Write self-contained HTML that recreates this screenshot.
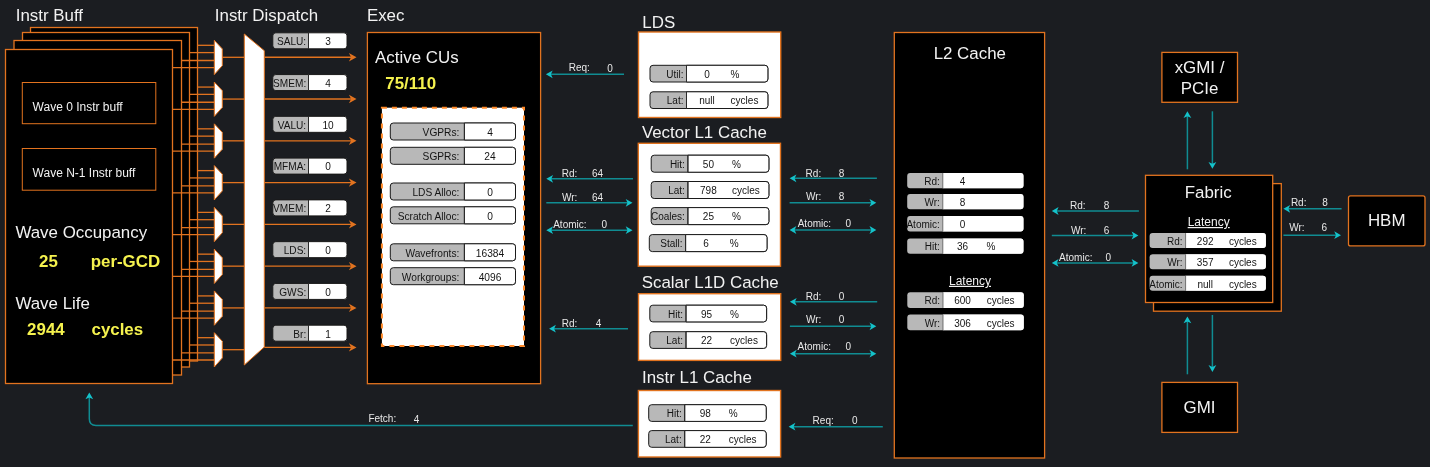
<!DOCTYPE html><html><head><meta charset="utf-8"><style>html,body{margin:0;padding:0;background:#1b1d21;}svg{display:block;will-change:transform;}</style></head><body>
<svg width="1430" height="467" viewBox="0 0 1430 467" font-family="Liberation Sans">
<rect x="0" y="0" width="1430" height="467" fill="#1b1d21"/>
<text x="15.7" y="20.6" font-size="16.9" fill="#f2f2f2">Instr Buff</text>
<text x="214.8" y="20.7" font-size="16.9" fill="#f2f2f2">Instr Dispatch</text>
<text x="366.9" y="20.9" font-size="16.9" fill="#f2f2f2">Exec</text>
<text x="642.3" y="27.6" font-size="16.9" fill="#f2f2f2">LDS</text>
<text x="641.9" y="138.1" font-size="16.9" fill="#f2f2f2">Vector L1 Cache</text>
<text x="641.7" y="287.8" font-size="16.9" fill="#f2f2f2">Scalar L1D Cache</text>
<text x="642" y="382.6" font-size="16.9" fill="#f2f2f2">Instr L1 Cache</text>
<rect x="30.5" y="27.5" width="167" height="333.5" fill="#000" stroke="#e2731f" stroke-width="1.3"/>
<rect x="22.5" y="32.5" width="167" height="334.5" fill="#000" stroke="#e2731f" stroke-width="1.3"/>
<rect x="14" y="40.5" width="167.5" height="334.5" fill="#000" stroke="#e2731f" stroke-width="1.3"/>
<rect x="5.5" y="49.5" width="167" height="334" fill="#000" stroke="#e2731f" stroke-width="1.3"/>
<rect x="22.3" y="82.5" width="133.5" height="41.2" fill="none" stroke="#e2731f" stroke-width="1"/>
<rect x="22.3" y="148.5" width="133.5" height="41.7" fill="none" stroke="#e2731f" stroke-width="1"/>
<text x="32.6" y="110.9" font-size="12" fill="#f2f2f2">Wave 0 Instr buff</text>
<text x="32.6" y="177.1" font-size="12" fill="#f2f2f2">Wave N-1 Instr buff</text>
<text x="15.4" y="237.9" font-size="16.9" fill="#f2f2f2">Wave Occupancy</text>
<text x="39.1" y="267" font-size="16.9" fill="#f5f24e" font-weight="bold">25</text>
<text x="90.7" y="267" font-size="16.9" fill="#f5f24e" font-weight="bold">per-GCD</text>
<text x="15.4" y="309.2" font-size="16.9" fill="#f2f2f2">Wave Life</text>
<text x="27.1" y="334.5" font-size="16.9" fill="#f5f24e" font-weight="bold">2944</text>
<text x="91.5" y="334.5" font-size="16.9" fill="#f5f24e" font-weight="bold">cycles</text>
<line x1="197.5" y1="45.3" x2="214.3" y2="45.3" stroke="#e2731f" stroke-width="1.3"/>
<line x1="189.5" y1="52.6" x2="214.3" y2="52.6" stroke="#e2731f" stroke-width="1.3"/>
<line x1="181.5" y1="60.5" x2="214.3" y2="60.5" stroke="#e2731f" stroke-width="1.3"/>
<line x1="172.5" y1="67.6" x2="214.3" y2="67.6" stroke="#e2731f" stroke-width="1.3"/>
<line x1="222.3" y1="57.3" x2="244.3" y2="57.3" stroke="#e2731f" stroke-width="1.3"/>
<path d="M214.3 40.3 L222.3 48.9 L222.3 65.6 L214.3 74.6 Z" fill="#fff" stroke="#e2731f" stroke-width="1"/>
<line x1="197.5" y1="87.07" x2="214.3" y2="87.07" stroke="#e2731f" stroke-width="1.3"/>
<line x1="189.5" y1="94.37" x2="214.3" y2="94.37" stroke="#e2731f" stroke-width="1.3"/>
<line x1="181.5" y1="102.27" x2="214.3" y2="102.27" stroke="#e2731f" stroke-width="1.3"/>
<line x1="172.5" y1="109.37" x2="214.3" y2="109.37" stroke="#e2731f" stroke-width="1.3"/>
<line x1="222.3" y1="99.07" x2="244.3" y2="99.07" stroke="#e2731f" stroke-width="1.3"/>
<path d="M214.3 82.07 L222.3 90.67 L222.3 107.37 L214.3 116.37 Z" fill="#fff" stroke="#e2731f" stroke-width="1"/>
<line x1="197.5" y1="128.84" x2="214.3" y2="128.84" stroke="#e2731f" stroke-width="1.3"/>
<line x1="189.5" y1="136.14" x2="214.3" y2="136.14" stroke="#e2731f" stroke-width="1.3"/>
<line x1="181.5" y1="144.04" x2="214.3" y2="144.04" stroke="#e2731f" stroke-width="1.3"/>
<line x1="172.5" y1="151.14" x2="214.3" y2="151.14" stroke="#e2731f" stroke-width="1.3"/>
<line x1="222.3" y1="140.84" x2="244.3" y2="140.84" stroke="#e2731f" stroke-width="1.3"/>
<path d="M214.3 123.84 L222.3 132.44 L222.3 149.14 L214.3 158.14 Z" fill="#fff" stroke="#e2731f" stroke-width="1"/>
<line x1="197.5" y1="170.61" x2="214.3" y2="170.61" stroke="#e2731f" stroke-width="1.3"/>
<line x1="189.5" y1="177.91" x2="214.3" y2="177.91" stroke="#e2731f" stroke-width="1.3"/>
<line x1="181.5" y1="185.81" x2="214.3" y2="185.81" stroke="#e2731f" stroke-width="1.3"/>
<line x1="172.5" y1="192.91" x2="214.3" y2="192.91" stroke="#e2731f" stroke-width="1.3"/>
<line x1="222.3" y1="182.61" x2="244.3" y2="182.61" stroke="#e2731f" stroke-width="1.3"/>
<path d="M214.3 165.61 L222.3 174.21 L222.3 190.91 L214.3 199.91 Z" fill="#fff" stroke="#e2731f" stroke-width="1"/>
<line x1="197.5" y1="212.38" x2="214.3" y2="212.38" stroke="#e2731f" stroke-width="1.3"/>
<line x1="189.5" y1="219.68" x2="214.3" y2="219.68" stroke="#e2731f" stroke-width="1.3"/>
<line x1="181.5" y1="227.58" x2="214.3" y2="227.58" stroke="#e2731f" stroke-width="1.3"/>
<line x1="172.5" y1="234.68" x2="214.3" y2="234.68" stroke="#e2731f" stroke-width="1.3"/>
<line x1="222.3" y1="224.38" x2="244.3" y2="224.38" stroke="#e2731f" stroke-width="1.3"/>
<path d="M214.3 207.38 L222.3 215.98 L222.3 232.68 L214.3 241.68 Z" fill="#fff" stroke="#e2731f" stroke-width="1"/>
<line x1="197.5" y1="254.15" x2="214.3" y2="254.15" stroke="#e2731f" stroke-width="1.3"/>
<line x1="189.5" y1="261.45" x2="214.3" y2="261.45" stroke="#e2731f" stroke-width="1.3"/>
<line x1="181.5" y1="269.35" x2="214.3" y2="269.35" stroke="#e2731f" stroke-width="1.3"/>
<line x1="172.5" y1="276.45" x2="214.3" y2="276.45" stroke="#e2731f" stroke-width="1.3"/>
<line x1="222.3" y1="266.15" x2="244.3" y2="266.15" stroke="#e2731f" stroke-width="1.3"/>
<path d="M214.3 249.15 L222.3 257.75 L222.3 274.45 L214.3 283.45 Z" fill="#fff" stroke="#e2731f" stroke-width="1"/>
<line x1="197.5" y1="295.92" x2="214.3" y2="295.92" stroke="#e2731f" stroke-width="1.3"/>
<line x1="189.5" y1="303.22" x2="214.3" y2="303.22" stroke="#e2731f" stroke-width="1.3"/>
<line x1="181.5" y1="311.12" x2="214.3" y2="311.12" stroke="#e2731f" stroke-width="1.3"/>
<line x1="172.5" y1="318.22" x2="214.3" y2="318.22" stroke="#e2731f" stroke-width="1.3"/>
<line x1="222.3" y1="307.92" x2="244.3" y2="307.92" stroke="#e2731f" stroke-width="1.3"/>
<path d="M214.3 290.92 L222.3 299.52 L222.3 316.22 L214.3 325.22 Z" fill="#fff" stroke="#e2731f" stroke-width="1"/>
<line x1="197.5" y1="337.69" x2="214.3" y2="337.69" stroke="#e2731f" stroke-width="1.3"/>
<line x1="189.5" y1="344.99" x2="214.3" y2="344.99" stroke="#e2731f" stroke-width="1.3"/>
<line x1="181.5" y1="352.89" x2="214.3" y2="352.89" stroke="#e2731f" stroke-width="1.3"/>
<line x1="172.5" y1="359.99" x2="214.3" y2="359.99" stroke="#e2731f" stroke-width="1.3"/>
<line x1="222.3" y1="349.69" x2="244.3" y2="349.69" stroke="#e2731f" stroke-width="1.3"/>
<path d="M214.3 332.69 L222.3 341.29 L222.3 357.99 L214.3 366.99 Z" fill="#fff" stroke="#e2731f" stroke-width="1"/>
<path d="M244.3 34 L264.3 50.7 L264.3 347 L244.3 365 Z" fill="#fff" stroke="#e2731f" stroke-width="1"/>
<line x1="264.3" y1="57.3" x2="351" y2="57.3" stroke="#e2731f" stroke-width="1.4"/>
<path d="M356.5 57.3 L348.9 61.5 L351.1 57.3 L348.9 53.1 Z" fill="#e2731f"/>
<rect x="272.8" y="32.8" width="74.2" height="16" rx="3" fill="#b8b8b8" stroke="#1a1a1a" stroke-width="1"/>
<path d="M308.5 32.8 H344 A3 3 0 0 1 347 35.8 V45.8 A3 3 0 0 1 344 48.8 H308.5 Z" fill="#ffffff" stroke="#1a1a1a" stroke-width="1"/>
<line x1="308.5" y1="32.8" x2="308.5" y2="48.8" stroke="#2a2a2a" stroke-width="1"/>
<text x="306.2" y="45.14" font-size="10.1" fill="#141414" text-anchor="end">SALU:</text>
<text x="328" y="45.14" font-size="10.1" fill="#141414" text-anchor="middle">3</text>
<line x1="264.3" y1="99.07" x2="351" y2="99.07" stroke="#e2731f" stroke-width="1.4"/>
<path d="M356.5 99.07 L348.9 103.27 L351.1 99.07 L348.9 94.87 Z" fill="#e2731f"/>
<rect x="272.8" y="74.57" width="74.2" height="16" rx="3" fill="#b8b8b8" stroke="#1a1a1a" stroke-width="1"/>
<path d="M308.5 74.57 H344 A3 3 0 0 1 347 77.57 V87.57 A3 3 0 0 1 344 90.57 H308.5 Z" fill="#ffffff" stroke="#1a1a1a" stroke-width="1"/>
<line x1="308.5" y1="74.57" x2="308.5" y2="90.57" stroke="#2a2a2a" stroke-width="1"/>
<text x="306.2" y="86.91" font-size="10.1" fill="#141414" text-anchor="end">SMEM:</text>
<text x="328" y="86.91" font-size="10.1" fill="#141414" text-anchor="middle">4</text>
<line x1="264.3" y1="140.84" x2="351" y2="140.84" stroke="#e2731f" stroke-width="1.4"/>
<path d="M356.5 140.84 L348.9 145.04 L351.1 140.84 L348.9 136.64 Z" fill="#e2731f"/>
<rect x="272.8" y="116.34" width="74.2" height="16" rx="3" fill="#b8b8b8" stroke="#1a1a1a" stroke-width="1"/>
<path d="M308.5 116.34 H344 A3 3 0 0 1 347 119.34 V129.34 A3 3 0 0 1 344 132.34 H308.5 Z" fill="#ffffff" stroke="#1a1a1a" stroke-width="1"/>
<line x1="308.5" y1="116.34" x2="308.5" y2="132.34" stroke="#2a2a2a" stroke-width="1"/>
<text x="306.2" y="128.68" font-size="10.1" fill="#141414" text-anchor="end">VALU:</text>
<text x="328" y="128.68" font-size="10.1" fill="#141414" text-anchor="middle">10</text>
<line x1="264.3" y1="182.61" x2="351" y2="182.61" stroke="#e2731f" stroke-width="1.4"/>
<path d="M356.5 182.61 L348.9 186.81 L351.1 182.61 L348.9 178.41 Z" fill="#e2731f"/>
<rect x="272.8" y="158.11" width="74.2" height="16" rx="3" fill="#b8b8b8" stroke="#1a1a1a" stroke-width="1"/>
<path d="M308.5 158.11 H344 A3 3 0 0 1 347 161.11 V171.11 A3 3 0 0 1 344 174.11 H308.5 Z" fill="#ffffff" stroke="#1a1a1a" stroke-width="1"/>
<line x1="308.5" y1="158.11" x2="308.5" y2="174.11" stroke="#2a2a2a" stroke-width="1"/>
<text x="306.2" y="170.45" font-size="10.1" fill="#141414" text-anchor="end">MFMA:</text>
<text x="328" y="170.45" font-size="10.1" fill="#141414" text-anchor="middle">0</text>
<line x1="264.3" y1="224.38" x2="351" y2="224.38" stroke="#e2731f" stroke-width="1.4"/>
<path d="M356.5 224.38 L348.9 228.58 L351.1 224.38 L348.9 220.18 Z" fill="#e2731f"/>
<rect x="272.8" y="199.88" width="74.2" height="16" rx="3" fill="#b8b8b8" stroke="#1a1a1a" stroke-width="1"/>
<path d="M308.5 199.88 H344 A3 3 0 0 1 347 202.88 V212.88 A3 3 0 0 1 344 215.88 H308.5 Z" fill="#ffffff" stroke="#1a1a1a" stroke-width="1"/>
<line x1="308.5" y1="199.88" x2="308.5" y2="215.88" stroke="#2a2a2a" stroke-width="1"/>
<text x="306.2" y="212.22" font-size="10.1" fill="#141414" text-anchor="end">VMEM:</text>
<text x="328" y="212.22" font-size="10.1" fill="#141414" text-anchor="middle">2</text>
<line x1="264.3" y1="266.15" x2="351" y2="266.15" stroke="#e2731f" stroke-width="1.4"/>
<path d="M356.5 266.15 L348.9 270.35 L351.1 266.15 L348.9 261.95 Z" fill="#e2731f"/>
<rect x="272.8" y="241.65" width="74.2" height="16" rx="3" fill="#b8b8b8" stroke="#1a1a1a" stroke-width="1"/>
<path d="M308.5 241.65 H344 A3 3 0 0 1 347 244.65 V254.65 A3 3 0 0 1 344 257.65 H308.5 Z" fill="#ffffff" stroke="#1a1a1a" stroke-width="1"/>
<line x1="308.5" y1="241.65" x2="308.5" y2="257.65" stroke="#2a2a2a" stroke-width="1"/>
<text x="306.2" y="253.99" font-size="10.1" fill="#141414" text-anchor="end">LDS:</text>
<text x="328" y="253.99" font-size="10.1" fill="#141414" text-anchor="middle">0</text>
<line x1="264.3" y1="307.92" x2="351" y2="307.92" stroke="#e2731f" stroke-width="1.4"/>
<path d="M356.5 307.92 L348.9 312.12 L351.1 307.92 L348.9 303.72 Z" fill="#e2731f"/>
<rect x="272.8" y="283.42" width="74.2" height="16" rx="3" fill="#b8b8b8" stroke="#1a1a1a" stroke-width="1"/>
<path d="M308.5 283.42 H344 A3 3 0 0 1 347 286.42 V296.42 A3 3 0 0 1 344 299.42 H308.5 Z" fill="#ffffff" stroke="#1a1a1a" stroke-width="1"/>
<line x1="308.5" y1="283.42" x2="308.5" y2="299.42" stroke="#2a2a2a" stroke-width="1"/>
<text x="306.2" y="295.76" font-size="10.1" fill="#141414" text-anchor="end">GWS:</text>
<text x="328" y="295.76" font-size="10.1" fill="#141414" text-anchor="middle">0</text>
<line x1="264.3" y1="347.4" x2="351" y2="347.4" stroke="#e2731f" stroke-width="1.4"/>
<path d="M356.5 347.4 L348.9 351.6 L351.1 347.4 L348.9 343.2 Z" fill="#e2731f"/>
<rect x="272.8" y="325.19" width="74.2" height="16" rx="3" fill="#b8b8b8" stroke="#1a1a1a" stroke-width="1"/>
<path d="M308.5 325.19 H344 A3 3 0 0 1 347 328.19 V338.19 A3 3 0 0 1 344 341.19 H308.5 Z" fill="#ffffff" stroke="#1a1a1a" stroke-width="1"/>
<line x1="308.5" y1="325.19" x2="308.5" y2="341.19" stroke="#2a2a2a" stroke-width="1"/>
<text x="306.2" y="337.53" font-size="10.1" fill="#141414" text-anchor="end">Br:</text>
<text x="328" y="337.53" font-size="10.1" fill="#141414" text-anchor="middle">1</text>
<rect x="367.4" y="32.5" width="173.2" height="351.2" fill="#000" stroke="#e2731f" stroke-width="1.3"/>
<text x="375.1" y="63.3" font-size="16.9" fill="#f2f2f2">Active CUs</text>
<text x="385.3" y="89.1" font-size="16.9" fill="#f5f24e" font-weight="bold">75/110</text>
<rect x="381.9" y="107.7" width="142.1" height="238.3" fill="#fff" stroke="#ff8a2a" stroke-width="2" stroke-dasharray="5 5"/>
<rect x="390.3" y="123" width="125.2" height="17" rx="3" fill="#b8b8b8" stroke="#1a1a1a" stroke-width="1"/>
<path d="M464.4 123 H512.5 A3 3 0 0 1 515.5 126 V137 A3 3 0 0 1 512.5 140 H464.4 Z" fill="#ffffff" stroke="#1a1a1a" stroke-width="1"/>
<line x1="464.4" y1="123" x2="464.4" y2="140" stroke="#2a2a2a" stroke-width="1"/>
<text x="459.4" y="135.89" font-size="10.2" fill="#141414" text-anchor="end">VGPRs:</text>
<text x="490" y="135.89" font-size="10.2" fill="#141414" text-anchor="middle">4</text>
<rect x="390.3" y="147.3" width="125.2" height="17" rx="3" fill="#b8b8b8" stroke="#1a1a1a" stroke-width="1"/>
<path d="M464.4 147.3 H512.5 A3 3 0 0 1 515.5 150.3 V161.3 A3 3 0 0 1 512.5 164.3 H464.4 Z" fill="#ffffff" stroke="#1a1a1a" stroke-width="1"/>
<line x1="464.4" y1="147.3" x2="464.4" y2="164.3" stroke="#2a2a2a" stroke-width="1"/>
<text x="459.4" y="160.19" font-size="10.2" fill="#141414" text-anchor="end">SGPRs:</text>
<text x="490" y="160.19" font-size="10.2" fill="#141414" text-anchor="middle">24</text>
<rect x="390.3" y="183" width="125.2" height="17" rx="3" fill="#b8b8b8" stroke="#1a1a1a" stroke-width="1"/>
<path d="M464.4 183 H512.5 A3 3 0 0 1 515.5 186 V197 A3 3 0 0 1 512.5 200 H464.4 Z" fill="#ffffff" stroke="#1a1a1a" stroke-width="1"/>
<line x1="464.4" y1="183" x2="464.4" y2="200" stroke="#2a2a2a" stroke-width="1"/>
<text x="459.4" y="195.89" font-size="10.2" fill="#141414" text-anchor="end">LDS Alloc:</text>
<text x="490" y="195.89" font-size="10.2" fill="#141414" text-anchor="middle">0</text>
<rect x="390.3" y="206.8" width="125.2" height="17" rx="3" fill="#b8b8b8" stroke="#1a1a1a" stroke-width="1"/>
<path d="M464.4 206.8 H512.5 A3 3 0 0 1 515.5 209.8 V220.8 A3 3 0 0 1 512.5 223.8 H464.4 Z" fill="#ffffff" stroke="#1a1a1a" stroke-width="1"/>
<line x1="464.4" y1="206.8" x2="464.4" y2="223.8" stroke="#2a2a2a" stroke-width="1"/>
<text x="459.4" y="219.69" font-size="10.2" fill="#141414" text-anchor="end">Scratch Alloc:</text>
<text x="490" y="219.69" font-size="10.2" fill="#141414" text-anchor="middle">0</text>
<rect x="390.3" y="243.8" width="125.2" height="17" rx="3" fill="#b8b8b8" stroke="#1a1a1a" stroke-width="1"/>
<path d="M464.4 243.8 H512.5 A3 3 0 0 1 515.5 246.8 V257.8 A3 3 0 0 1 512.5 260.8 H464.4 Z" fill="#ffffff" stroke="#1a1a1a" stroke-width="1"/>
<line x1="464.4" y1="243.8" x2="464.4" y2="260.8" stroke="#2a2a2a" stroke-width="1"/>
<text x="459.4" y="256.69" font-size="10.2" fill="#141414" text-anchor="end">Wavefronts:</text>
<text x="490" y="256.69" font-size="10.2" fill="#141414" text-anchor="middle">16384</text>
<rect x="390.3" y="267.7" width="125.2" height="17" rx="3" fill="#b8b8b8" stroke="#1a1a1a" stroke-width="1"/>
<path d="M464.4 267.7 H512.5 A3 3 0 0 1 515.5 270.7 V281.7 A3 3 0 0 1 512.5 284.7 H464.4 Z" fill="#ffffff" stroke="#1a1a1a" stroke-width="1"/>
<line x1="464.4" y1="267.7" x2="464.4" y2="284.7" stroke="#2a2a2a" stroke-width="1"/>
<text x="459.4" y="280.59" font-size="10.2" fill="#141414" text-anchor="end">Workgroups:</text>
<text x="490" y="280.59" font-size="10.2" fill="#141414" text-anchor="middle">4096</text>
<rect x="638.5" y="32" width="142.2" height="85.5" fill="#fff" stroke="#e2731f" stroke-width="1.4"/>
<rect x="650" y="65.3" width="117.9" height="16.7" rx="3" fill="#b8b8b8" stroke="#1a1a1a" stroke-width="1"/>
<path d="M686.5 65.3 H764.9 A3 3 0 0 1 767.9 68.3 V79 A3 3 0 0 1 764.9 82 H686.5 Z" fill="#ffffff" stroke="#1a1a1a" stroke-width="1"/>
<line x1="686.5" y1="65.3" x2="686.5" y2="82" stroke="#2a2a2a" stroke-width="1"/>
<text x="683.5" y="77.95" font-size="10" fill="#141414" text-anchor="end">Util:</text>
<text x="707" y="77.95" font-size="10" fill="#141414" text-anchor="middle">0</text>
<text x="735" y="77.95" font-size="10" fill="#141414" text-anchor="middle">%</text>
<rect x="650" y="91.8" width="117.9" height="16.7" rx="3" fill="#b8b8b8" stroke="#1a1a1a" stroke-width="1"/>
<path d="M686.5 91.8 H764.9 A3 3 0 0 1 767.9 94.8 V105.5 A3 3 0 0 1 764.9 108.5 H686.5 Z" fill="#ffffff" stroke="#1a1a1a" stroke-width="1"/>
<line x1="686.5" y1="91.8" x2="686.5" y2="108.5" stroke="#2a2a2a" stroke-width="1"/>
<text x="683.5" y="104.45" font-size="10" fill="#141414" text-anchor="end">Lat:</text>
<text x="707" y="104.45" font-size="10" fill="#141414" text-anchor="middle">null</text>
<text x="744.5" y="104.45" font-size="10" fill="#141414" text-anchor="middle">cycles</text>
<rect x="638.3" y="143.3" width="142.2" height="122.9" fill="#fff" stroke="#e2731f" stroke-width="1.4"/>
<rect x="651.2" y="155.2" width="117.7" height="17" rx="3" fill="#b8b8b8" stroke="#1a1a1a" stroke-width="1"/>
<path d="M687.9 155.2 H765.9 A3 3 0 0 1 768.9 158.2 V169.2 A3 3 0 0 1 765.9 172.2 H687.9 Z" fill="#ffffff" stroke="#1a1a1a" stroke-width="1"/>
<line x1="687.9" y1="155.2" x2="687.9" y2="172.2" stroke="#2a2a2a" stroke-width="1"/>
<text x="684.9" y="168" font-size="10" fill="#141414" text-anchor="end">Hit:</text>
<text x="708.4" y="168" font-size="10" fill="#141414" text-anchor="middle">50</text>
<text x="736.4" y="168" font-size="10" fill="#141414" text-anchor="middle">%</text>
<rect x="651.2" y="181.5" width="117.7" height="17" rx="3" fill="#b8b8b8" stroke="#1a1a1a" stroke-width="1"/>
<path d="M687.9 181.5 H765.9 A3 3 0 0 1 768.9 184.5 V195.5 A3 3 0 0 1 765.9 198.5 H687.9 Z" fill="#ffffff" stroke="#1a1a1a" stroke-width="1"/>
<line x1="687.9" y1="181.5" x2="687.9" y2="198.5" stroke="#2a2a2a" stroke-width="1"/>
<text x="684.9" y="194.3" font-size="10" fill="#141414" text-anchor="end">Lat:</text>
<text x="708.4" y="194.3" font-size="10" fill="#141414" text-anchor="middle">798</text>
<text x="745.9" y="194.3" font-size="10" fill="#141414" text-anchor="middle">cycles</text>
<rect x="651.2" y="207.6" width="117.7" height="17" rx="3" fill="#b8b8b8" stroke="#1a1a1a" stroke-width="1"/>
<path d="M687.9 207.6 H765.9 A3 3 0 0 1 768.9 210.6 V221.6 A3 3 0 0 1 765.9 224.6 H687.9 Z" fill="#ffffff" stroke="#1a1a1a" stroke-width="1"/>
<line x1="687.9" y1="207.6" x2="687.9" y2="224.6" stroke="#2a2a2a" stroke-width="1"/>
<text x="684.9" y="220.4" font-size="10" fill="#141414" text-anchor="end">Coales:</text>
<text x="708.4" y="220.4" font-size="10" fill="#141414" text-anchor="middle">25</text>
<text x="736.4" y="220.4" font-size="10" fill="#141414" text-anchor="middle">%</text>
<rect x="649.3" y="234.6" width="117.7" height="17" rx="3" fill="#b8b8b8" stroke="#1a1a1a" stroke-width="1"/>
<path d="M685.6 234.6 H764 A3 3 0 0 1 767 237.6 V248.6 A3 3 0 0 1 764 251.6 H685.6 Z" fill="#ffffff" stroke="#1a1a1a" stroke-width="1"/>
<line x1="685.6" y1="234.6" x2="685.6" y2="251.6" stroke="#2a2a2a" stroke-width="1"/>
<text x="682.6" y="247.4" font-size="10" fill="#141414" text-anchor="end">Stall:</text>
<text x="706.1" y="247.4" font-size="10" fill="#141414" text-anchor="middle">6</text>
<text x="734.1" y="247.4" font-size="10" fill="#141414" text-anchor="middle">%</text>
<rect x="638.5" y="293.7" width="142.2" height="66.7" fill="#fff" stroke="#e2731f" stroke-width="1.4"/>
<rect x="649.8" y="305.2" width="116.8" height="16.7" rx="3" fill="#b8b8b8" stroke="#1a1a1a" stroke-width="1"/>
<path d="M686 305.2 H763.6 A3 3 0 0 1 766.6 308.2 V318.9 A3 3 0 0 1 763.6 321.9 H686 Z" fill="#ffffff" stroke="#1a1a1a" stroke-width="1"/>
<line x1="686" y1="305.2" x2="686" y2="321.9" stroke="#2a2a2a" stroke-width="1"/>
<text x="683" y="317.85" font-size="10" fill="#141414" text-anchor="end">Hit:</text>
<text x="706.5" y="317.85" font-size="10" fill="#141414" text-anchor="middle">95</text>
<text x="734.5" y="317.85" font-size="10" fill="#141414" text-anchor="middle">%</text>
<rect x="649.8" y="331.7" width="116.8" height="16.7" rx="3" fill="#b8b8b8" stroke="#1a1a1a" stroke-width="1"/>
<path d="M686 331.7 H763.6 A3 3 0 0 1 766.6 334.7 V345.4 A3 3 0 0 1 763.6 348.4 H686 Z" fill="#ffffff" stroke="#1a1a1a" stroke-width="1"/>
<line x1="686" y1="331.7" x2="686" y2="348.4" stroke="#2a2a2a" stroke-width="1"/>
<text x="683" y="344.35" font-size="10" fill="#141414" text-anchor="end">Lat:</text>
<text x="706.5" y="344.35" font-size="10" fill="#141414" text-anchor="middle">22</text>
<text x="744" y="344.35" font-size="10" fill="#141414" text-anchor="middle">cycles</text>
<rect x="638.4" y="390.5" width="142.2" height="66.5" fill="#fff" stroke="#e2731f" stroke-width="1.4"/>
<rect x="648.7" y="404.7" width="117.5" height="16.7" rx="3" fill="#b8b8b8" stroke="#1a1a1a" stroke-width="1"/>
<path d="M684.7 404.7 H763.2 A3 3 0 0 1 766.2 407.7 V418.4 A3 3 0 0 1 763.2 421.4 H684.7 Z" fill="#ffffff" stroke="#1a1a1a" stroke-width="1"/>
<line x1="684.7" y1="404.7" x2="684.7" y2="421.4" stroke="#2a2a2a" stroke-width="1"/>
<text x="681.7" y="417.35" font-size="10" fill="#141414" text-anchor="end">Hit:</text>
<text x="705.2" y="417.35" font-size="10" fill="#141414" text-anchor="middle">98</text>
<text x="733.2" y="417.35" font-size="10" fill="#141414" text-anchor="middle">%</text>
<rect x="648.7" y="430.6" width="117.5" height="16.7" rx="3" fill="#b8b8b8" stroke="#1a1a1a" stroke-width="1"/>
<path d="M684.7 430.6 H763.2 A3 3 0 0 1 766.2 433.6 V444.3 A3 3 0 0 1 763.2 447.3 H684.7 Z" fill="#ffffff" stroke="#1a1a1a" stroke-width="1"/>
<line x1="684.7" y1="430.6" x2="684.7" y2="447.3" stroke="#2a2a2a" stroke-width="1"/>
<text x="681.7" y="443.25" font-size="10" fill="#141414" text-anchor="end">Lat:</text>
<text x="705.2" y="443.25" font-size="10" fill="#141414" text-anchor="middle">22</text>
<text x="742.7" y="443.25" font-size="10" fill="#141414" text-anchor="middle">cycles</text>
<rect x="894.3" y="32.5" width="150.3" height="425.5" fill="#000" stroke="#e2731f" stroke-width="1.3"/>
<text x="969.8" y="58.6" font-size="16.9" fill="#f2f2f2" text-anchor="middle">L2 Cache</text>
<rect x="907.2" y="172.9" width="116.3" height="15.4" rx="3" fill="#b8b8b8"/>
<path d="M942.8 172.9 H1020.5 A3 3 0 0 1 1023.5 175.9 V185.3 A3 3 0 0 1 1020.5 188.3 H942.8 Z" fill="#ffffff"/>
<line x1="942.8" y1="172.9" x2="942.8" y2="188.3" stroke="#555" stroke-width="0.8"/>
<text x="939.8" y="184.9" font-size="10" fill="#141414" text-anchor="end">Rd:</text>
<text x="962.5" y="184.9" font-size="10" fill="#141414" text-anchor="middle">4</text>
<rect x="907.2" y="193.9" width="116.3" height="15.4" rx="3" fill="#b8b8b8"/>
<path d="M942.8 193.9 H1020.5 A3 3 0 0 1 1023.5 196.9 V206.3 A3 3 0 0 1 1020.5 209.3 H942.8 Z" fill="#ffffff"/>
<line x1="942.8" y1="193.9" x2="942.8" y2="209.3" stroke="#555" stroke-width="0.8"/>
<text x="939.8" y="205.9" font-size="10" fill="#141414" text-anchor="end">Wr:</text>
<text x="962.5" y="205.9" font-size="10" fill="#141414" text-anchor="middle">8</text>
<rect x="907.2" y="216" width="116.3" height="15.4" rx="3" fill="#b8b8b8"/>
<path d="M942.8 216 H1020.5 A3 3 0 0 1 1023.5 219 V228.4 A3 3 0 0 1 1020.5 231.4 H942.8 Z" fill="#ffffff"/>
<line x1="942.8" y1="216" x2="942.8" y2="231.4" stroke="#555" stroke-width="0.8"/>
<text x="939.8" y="228" font-size="10" fill="#141414" text-anchor="end">Atomic:</text>
<text x="962.5" y="228" font-size="10" fill="#141414" text-anchor="middle">0</text>
<rect x="907.2" y="238.4" width="116.3" height="15.4" rx="3" fill="#b8b8b8"/>
<path d="M942.8 238.4 H1020.5 A3 3 0 0 1 1023.5 241.4 V250.8 A3 3 0 0 1 1020.5 253.8 H942.8 Z" fill="#ffffff"/>
<line x1="942.8" y1="238.4" x2="942.8" y2="253.8" stroke="#555" stroke-width="0.8"/>
<text x="939.8" y="250.4" font-size="10" fill="#141414" text-anchor="end">Hit:</text>
<text x="962.5" y="250.4" font-size="10" fill="#141414" text-anchor="middle">36</text>
<text x="991" y="250.4" font-size="10" fill="#141414" text-anchor="middle">%</text>
<text x="970" y="284.8" font-size="12" fill="#f2f2f2" text-anchor="middle" text-decoration="underline">Latency</text>
<rect x="907.3" y="292.2" width="116.5" height="15.7" rx="3" fill="#b8b8b8"/>
<path d="M943 292.2 H1020.8 A3 3 0 0 1 1023.8 295.2 V304.9 A3 3 0 0 1 1020.8 307.9 H943 Z" fill="#ffffff"/>
<line x1="943" y1="292.2" x2="943" y2="307.9" stroke="#555" stroke-width="0.8"/>
<text x="940" y="304.35" font-size="10" fill="#141414" text-anchor="end">Rd:</text>
<text x="962.6" y="304.35" font-size="10" fill="#141414" text-anchor="middle">600</text>
<text x="1000.6" y="304.35" font-size="10" fill="#141414" text-anchor="middle">cycles</text>
<rect x="907.3" y="314.5" width="116.5" height="15.7" rx="3" fill="#b8b8b8"/>
<path d="M943 314.5 H1020.8 A3 3 0 0 1 1023.8 317.5 V327.2 A3 3 0 0 1 1020.8 330.2 H943 Z" fill="#ffffff"/>
<line x1="943" y1="314.5" x2="943" y2="330.2" stroke="#555" stroke-width="0.8"/>
<text x="940" y="326.65" font-size="10" fill="#141414" text-anchor="end">Wr:</text>
<text x="962.6" y="326.65" font-size="10" fill="#141414" text-anchor="middle">306</text>
<text x="1000.6" y="326.65" font-size="10" fill="#141414" text-anchor="middle">cycles</text>
<rect x="1153.5" y="183.6" width="127.8" height="127.6" fill="#000" stroke="#e2731f" stroke-width="1.3"/>
<rect x="1145.5" y="175.3" width="127.2" height="127.2" fill="#000" stroke="#e2731f" stroke-width="1.3"/>
<text x="1208.2" y="198.1" font-size="16.9" fill="#f2f2f2" text-anchor="middle">Fabric</text>
<text x="1208.7" y="226" font-size="12" fill="#f2f2f2" text-anchor="middle" text-decoration="underline">Latency</text>
<rect x="1149.6" y="233.1" width="116.3" height="15" rx="3" fill="#b8b8b8"/>
<path d="M1185.6 233.1 H1262.9 A3 3 0 0 1 1265.9 236.1 V245.1 A3 3 0 0 1 1262.9 248.1 H1185.6 Z" fill="#ffffff"/>
<line x1="1185.6" y1="233.1" x2="1185.6" y2="248.1" stroke="#555" stroke-width="0.8"/>
<text x="1182.6" y="244.9" font-size="10" fill="#141414" text-anchor="end">Rd:</text>
<text x="1205.2" y="244.9" font-size="10" fill="#141414" text-anchor="middle">292</text>
<text x="1242.8" y="244.9" font-size="10" fill="#141414" text-anchor="middle">cycles</text>
<rect x="1149.6" y="254.3" width="116.3" height="15" rx="3" fill="#b8b8b8"/>
<path d="M1185.6 254.3 H1262.9 A3 3 0 0 1 1265.9 257.3 V266.3 A3 3 0 0 1 1262.9 269.3 H1185.6 Z" fill="#ffffff"/>
<line x1="1185.6" y1="254.3" x2="1185.6" y2="269.3" stroke="#555" stroke-width="0.8"/>
<text x="1182.6" y="266.1" font-size="10" fill="#141414" text-anchor="end">Wr:</text>
<text x="1205.2" y="266.1" font-size="10" fill="#141414" text-anchor="middle">357</text>
<text x="1242.8" y="266.1" font-size="10" fill="#141414" text-anchor="middle">cycles</text>
<rect x="1149.6" y="275.8" width="116.3" height="15" rx="3" fill="#b8b8b8"/>
<path d="M1185.6 275.8 H1262.9 A3 3 0 0 1 1265.9 278.8 V287.8 A3 3 0 0 1 1262.9 290.8 H1185.6 Z" fill="#ffffff"/>
<line x1="1185.6" y1="275.8" x2="1185.6" y2="290.8" stroke="#555" stroke-width="0.8"/>
<text x="1182.6" y="287.6" font-size="10" fill="#141414" text-anchor="end">Atomic:</text>
<text x="1205.2" y="287.6" font-size="10" fill="#141414" text-anchor="middle">null</text>
<text x="1242.8" y="287.6" font-size="10" fill="#141414" text-anchor="middle">cycles</text>
<rect x="1161.9" y="52.4" width="75.6" height="49.9" fill="#000" stroke="#e2731f" stroke-width="1.3"/>
<text x="1199.5" y="72.8" font-size="16.9" fill="#f2f2f2" text-anchor="middle">xGMI /</text>
<text x="1199.5" y="93.5" font-size="16.9" fill="#f2f2f2" text-anchor="middle">PCIe</text>
<rect x="1161.9" y="382.4" width="75.6" height="50" fill="#000" stroke="#e2731f" stroke-width="1.3"/>
<text x="1199.5" y="412.9" font-size="16.9" fill="#f2f2f2" text-anchor="middle">GMI</text>
<rect x="1348.5" y="195.8" width="76.5" height="50.1" fill="#000" stroke="#e2731f" stroke-width="1.3" rx="2"/>
<text x="1386.7" y="225.7" font-size="16.9" fill="#f2f2f2" text-anchor="middle">HBM</text>
<line x1="549.9" y1="74.3" x2="624" y2="74.3" stroke="#108c92" stroke-width="1.5"/>
<path d="M545.9 74.3 L552.7 70.4 L550.9 74.3 L552.7 78.2 Z" fill="#14c2ca"/>
<text x="568.7" y="70.5" font-size="10" fill="#e8e8e8">Req:</text>
<text x="607.2" y="71.5" font-size="10" fill="#e8e8e8">0</text>
<line x1="550.3" y1="178.8" x2="633" y2="178.8" stroke="#108c92" stroke-width="1.5"/>
<path d="M546.3 178.8 L553.1 174.9 L551.3 178.8 L553.1 182.7 Z" fill="#14c2ca"/>
<text x="561.7" y="176.8" font-size="10" fill="#e8e8e8">Rd:</text>
<text x="591.9" y="176.8" font-size="10" fill="#e8e8e8">64</text>
<line x1="546.3" y1="202.8" x2="628.5" y2="202.8" stroke="#108c92" stroke-width="1.5"/>
<path d="M632.5 202.8 L625.7 206.7 L627.5 202.8 L625.7 198.9 Z" fill="#14c2ca"/>
<text x="561.9" y="200.7" font-size="10" fill="#e8e8e8">Wr:</text>
<text x="591.9" y="200.7" font-size="10" fill="#e8e8e8">64</text>
<line x1="550.3" y1="230.2" x2="628.5" y2="230.2" stroke="#108c92" stroke-width="1.5"/>
<path d="M546.3 230.2 L553.1 226.3 L551.3 230.2 L553.1 234.1 Z" fill="#14c2ca"/>
<path d="M632.5 230.2 L625.7 234.1 L627.5 230.2 L625.7 226.3 Z" fill="#14c2ca"/>
<text x="553.2" y="227.8" font-size="10" fill="#e8e8e8">Atomic:</text>
<text x="601.6" y="227.8" font-size="10" fill="#e8e8e8">0</text>
<line x1="553.1" y1="328.7" x2="628" y2="328.7" stroke="#108c92" stroke-width="1.5"/>
<path d="M549.1 328.7 L555.9 324.8 L554.1 328.7 L555.9 332.6 Z" fill="#14c2ca"/>
<text x="561.7" y="326.7" font-size="10" fill="#e8e8e8">Rd:</text>
<text x="595.7" y="326.7" font-size="10" fill="#e8e8e8">4</text>
<path d="M632.8 425.5 H96 Q89.3 425.5 89.3 418.8 V396.5" fill="none" stroke="#108c92" stroke-width="1.5"/>
<path d="M89.3 392.5 L93.2 399.3 L89.3 397.5 L85.4 399.3 Z" fill="#14c2ca"/>
<text x="368.4" y="421.7" font-size="10" fill="#e8e8e8">Fetch:</text>
<text x="413.8" y="422.9" font-size="10" fill="#e8e8e8">4</text>
<line x1="793.6" y1="178.3" x2="876.9" y2="178.3" stroke="#108c92" stroke-width="1.5"/>
<path d="M789.6 178.3 L796.4 174.4 L794.6 178.3 L796.4 182.2 Z" fill="#14c2ca"/>
<text x="805.6" y="176.9" font-size="10" fill="#e8e8e8">Rd:</text>
<text x="838.8" y="176.9" font-size="10" fill="#e8e8e8">8</text>
<line x1="789.6" y1="202.8" x2="872.3" y2="202.8" stroke="#108c92" stroke-width="1.5"/>
<path d="M876.3 202.8 L869.5 206.7 L871.3 202.8 L869.5 198.9 Z" fill="#14c2ca"/>
<text x="806" y="200" font-size="10" fill="#e8e8e8">Wr:</text>
<text x="838.8" y="200" font-size="10" fill="#e8e8e8">8</text>
<line x1="793.6" y1="230" x2="872.3" y2="230" stroke="#108c92" stroke-width="1.5"/>
<path d="M789.6 230 L796.4 226.1 L794.6 230 L796.4 233.9 Z" fill="#14c2ca"/>
<path d="M876.3 230 L869.5 233.9 L871.3 230 L869.5 226.1 Z" fill="#14c2ca"/>
<text x="797.7" y="227" font-size="10" fill="#e8e8e8">Atomic:</text>
<text x="845.5" y="227" font-size="10" fill="#e8e8e8">0</text>
<line x1="793.9" y1="301.8" x2="877.2" y2="301.8" stroke="#108c92" stroke-width="1.5"/>
<path d="M789.9 301.8 L796.7 297.9 L794.9 301.8 L796.7 305.7 Z" fill="#14c2ca"/>
<text x="805.7" y="300.2" font-size="10" fill="#e8e8e8">Rd:</text>
<text x="838.8" y="300.2" font-size="10" fill="#e8e8e8">0</text>
<line x1="789.9" y1="326.3" x2="872.3" y2="326.3" stroke="#108c92" stroke-width="1.5"/>
<path d="M876.3 326.3 L869.5 330.2 L871.3 326.3 L869.5 322.4 Z" fill="#14c2ca"/>
<text x="806" y="323.3" font-size="10" fill="#e8e8e8">Wr:</text>
<text x="838.8" y="323.3" font-size="10" fill="#e8e8e8">0</text>
<line x1="793.9" y1="353.7" x2="872.3" y2="353.7" stroke="#108c92" stroke-width="1.5"/>
<path d="M789.9 353.7 L796.7 349.8 L794.9 353.7 L796.7 357.6 Z" fill="#14c2ca"/>
<path d="M876.3 353.7 L869.5 357.6 L871.3 353.7 L869.5 349.8 Z" fill="#14c2ca"/>
<text x="797.6" y="350.4" font-size="10" fill="#e8e8e8">Atomic:</text>
<text x="845.6" y="350.4" font-size="10" fill="#e8e8e8">0</text>
<line x1="792.6" y1="426.7" x2="882.8" y2="426.7" stroke="#108c92" stroke-width="1.5"/>
<path d="M788.6 426.7 L795.4 422.8 L793.6 426.7 L795.4 430.6 Z" fill="#14c2ca"/>
<text x="812.6" y="423.7" font-size="10" fill="#e8e8e8">Req:</text>
<text x="852" y="423.7" font-size="10" fill="#e8e8e8">0</text>
<line x1="1055.8" y1="211" x2="1138.9" y2="211" stroke="#108c92" stroke-width="1.5"/>
<path d="M1051.8 211 L1058.6 207.1 L1056.8 211 L1058.6 214.9 Z" fill="#14c2ca"/>
<text x="1070" y="209.3" font-size="10" fill="#e8e8e8">Rd:</text>
<text x="1103.7" y="209.3" font-size="10" fill="#e8e8e8">8</text>
<line x1="1051.8" y1="235.5" x2="1134.4" y2="235.5" stroke="#108c92" stroke-width="1.5"/>
<path d="M1138.4 235.5 L1131.6 239.4 L1133.4 235.5 L1131.6 231.6 Z" fill="#14c2ca"/>
<text x="1071" y="233.7" font-size="10" fill="#e8e8e8">Wr:</text>
<text x="1103.7" y="233.7" font-size="10" fill="#e8e8e8">6</text>
<line x1="1055.8" y1="262.9" x2="1134.4" y2="262.9" stroke="#108c92" stroke-width="1.5"/>
<path d="M1051.8 262.9 L1058.6 259 L1056.8 262.9 L1058.6 266.8 Z" fill="#14c2ca"/>
<path d="M1138.4 262.9 L1131.6 266.8 L1133.4 262.9 L1131.6 259 Z" fill="#14c2ca"/>
<text x="1059.1" y="260.6" font-size="10" fill="#e8e8e8">Atomic:</text>
<text x="1105.6" y="260.6" font-size="10" fill="#e8e8e8">0</text>
<line x1="1287.4" y1="208.8" x2="1341.6" y2="208.8" stroke="#108c92" stroke-width="1.5"/>
<path d="M1283.4 208.8 L1290.2 204.9 L1288.4 208.8 L1290.2 212.7 Z" fill="#14c2ca"/>
<text x="1290.9" y="206.2" font-size="10" fill="#e8e8e8">Rd:</text>
<text x="1322.2" y="206.2" font-size="10" fill="#e8e8e8">8</text>
<line x1="1283.4" y1="235.2" x2="1337" y2="235.2" stroke="#108c92" stroke-width="1.5"/>
<path d="M1341 235.2 L1334.2 239.1 L1336 235.2 L1334.2 231.3 Z" fill="#14c2ca"/>
<text x="1289.2" y="231" font-size="10" fill="#e8e8e8">Wr:</text>
<text x="1321.4" y="231" font-size="10" fill="#e8e8e8">6</text>
<line x1="1187.4" y1="115.3" x2="1187.4" y2="169.3" stroke="#108c92" stroke-width="1.5"/>
<path d="M1187.4 111.3 L1191.3 118.1 L1187.4 116.3 L1183.5 118.1 Z" fill="#14c2ca"/>
<line x1="1212.4" y1="111.3" x2="1212.4" y2="164.7" stroke="#108c92" stroke-width="1.5"/>
<path d="M1212.4 168.7 L1208.5 161.9 L1212.4 163.7 L1216.3 161.9 Z" fill="#14c2ca"/>
<line x1="1187.4" y1="320.5" x2="1187.4" y2="374.3" stroke="#108c92" stroke-width="1.5"/>
<path d="M1187.4 316.5 L1191.3 323.3 L1187.4 321.5 L1183.5 323.3 Z" fill="#14c2ca"/>
<line x1="1212.4" y1="315" x2="1212.4" y2="367.9" stroke="#108c92" stroke-width="1.5"/>
<path d="M1212.4 371.9 L1208.5 365.1 L1212.4 366.9 L1216.3 365.1 Z" fill="#14c2ca"/>
</svg></body></html>
